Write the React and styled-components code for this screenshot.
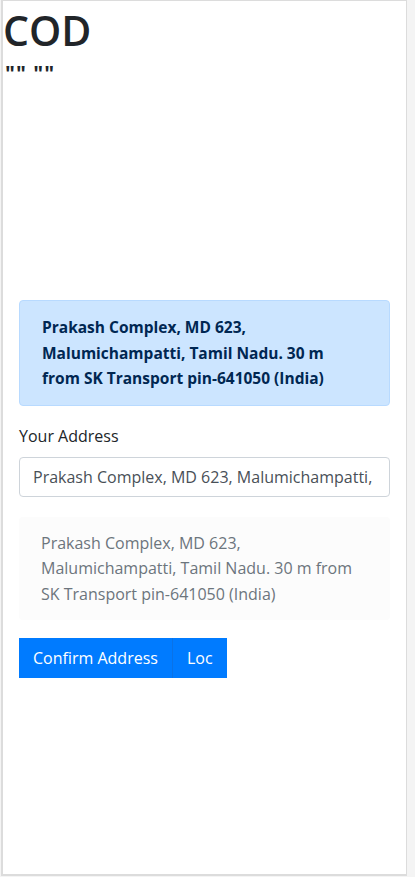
import * as React from "react";
import styled, { createGlobalStyle } from "styled-components";

const GlobalStyle = createGlobalStyle`
  html, body {
    margin: 0;
    padding: 0;
    background: #f4f4f4;
  }
  body {
    font-family: "Open Sans", "Noto Sans", Arial, sans-serif;
    color: #212529;
  }
`;

const Frame = styled.div`
  box-sizing: border-box;
  width: 406px;
  height: 876px;
  margin-left: 1px;
  background: #fff;
  border: 1px solid #dcdcdc;
  border-width: 1px 1px 2px 2px;
  overflow: hidden;
`;

const Title = styled.h1`
  margin: 0;
  font-size: 41px;
  font-weight: 600;
  line-height: 58px;
  color: #212529;
`;

const Quotes = styled.div`
  margin-top: 4px;
  font-size: 21px;
  font-weight: 700;
  line-height: 20px;
  padding-left: 2px;
  letter-spacing: 1px;
`;

const MapSpace = styled.div`
  height: 217px;
`;

const Body = styled.div`
  padding: 0 16px 0 16px;
`;

const Alert = styled.div`
  background: #cce5ff;
  border: 1px solid #b8daff;
  border-radius: 4px;
  color: #002752;
  font-weight: 700;
  font-size: 15.5px;
  line-height: 25.5px;
  padding: 14px 32px 13px 22px;
`;

const Label = styled.label`
  display: block;
  margin-top: 18px;
  font-size: 16px;
  line-height: 24px;
  color: #212529;
`;

const Input = styled.input`
  box-sizing: border-box;
  display: block;
  width: 100%;
  height: 40px;
  margin-top: 9px;
  padding: 0 13px;
  border: 1px solid #ced4da;
  border-radius: 4px;
  font-family: inherit;
  font-size: 16px;
  color: #495057;
  background: #fff;
`;

const Preview = styled.div`
  margin-top: 20px;
  background: #fcfcfc;
  border-radius: 4px;
  color: #6c757d;
  font-size: 16px;
  line-height: 25.5px;
  padding: 14px 22px 13px 22px;
`;

const ButtonRow = styled.div`
  display: flex;
  margin-top: 18px;
`;

const Button = styled.button`
  height: 40px;
  padding: 0 14px;
  border: none;
  border-left: ${(p) => (p.$split ? "1px solid #0a72e6" : "none")};
  background: #007bff;
  color: #fff;
  font-family: inherit;
  font-size: 16px;
  border-radius: 0;
`;

const address =
  "Prakash Complex, MD 623, Malumichampatti, Tamil Nadu. 30 m from SK Transport pin-641050 (India)";

export default function App() {
  return (
    <>
      <GlobalStyle />
      <Frame>
        <Title>COD</Title>
        <Quotes>"" ""</Quotes>
        <MapSpace />
        <Body>
          <Alert>{address}</Alert>
          <Label>Your Address</Label>
          <Input readOnly value={address} />
          <Preview>{address}</Preview>
          <ButtonRow>
            <Button>Confirm Address</Button>
            <Button $split>Loc</Button>
          </ButtonRow>
        </Body>
      </Frame>
    </>
  );
}
